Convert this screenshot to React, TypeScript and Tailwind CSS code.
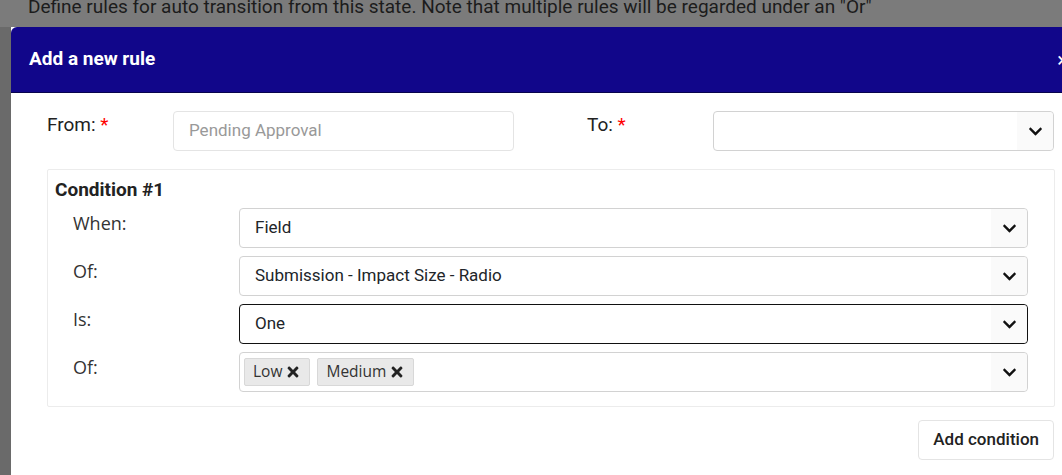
import React from 'react';
import { FaChevronDown, FaTimes } from 'react-icons/fa';

function Chevron() {
  return (
    <div className="flex h-full w-[36px] shrink-0 items-center justify-center rounded-r-[4px] bg-[#fafafa]">
      <FaChevronDown size={15} className="text-[#111]" />
    </div>
  );
}

function Select({ value, focused }: { value?: string; focused?: boolean }) {
  return (
    <div
      className={
        focused
          ? 'flex h-[40px] flex-1 items-center rounded-[4px] border border-[#111] bg-white'
          : 'flex h-[40px] flex-1 items-center rounded-[4px] border border-[#d2d2d2] bg-white'
      }
    >
      <div className="flex-1 pl-[15px] text-[17px] text-[#212529]">{value}</div>
      <Chevron />
    </div>
  );
}

function Tag({ label }: { label: string }) {
  return (
    <div className="flex h-[28px] items-center gap-[3px] rounded-[2px] border border-[#d8d8d8] bg-[#e9e9e9] px-[8px] font-['Open_Sans',sans-serif] text-[15.5px] text-[#333]">
      {label}
      <FaTimes size={16} className="text-[#222]" />
    </div>
  );
}

const conditionRows = [
  { label: 'When:', value: 'Field' },
  { label: 'Of:', value: 'Submission - Impact Size - Radio' },
  { label: 'Is:', value: 'One', focused: true },
];

export default function App() {
  return (
    <div className="h-[475px] w-[1062px] overflow-hidden bg-[#7b7b7b] font-['Roboto',sans-serif]">
      {/* dimmed page behind the dialog */}
      <div className="h-[27px] overflow-hidden pl-[28px]">
        <p className="-mt-[7px] whitespace-nowrap text-[19px] leading-[28px] text-[#1c1c1c]">
          Define rules for auto transition from this state. Note that multiple rules will be regarded under an "Or"
        </p>
      </div>

      <div className="flex">
        <div className="h-[448px] w-[11px] shrink-0 bg-[#6a6a6a]" />

        <div className="w-[1075px] shrink-0 bg-white">
          <div className="flex h-[66px] items-center justify-between rounded-tl-[6px] border-b border-[#08044d] bg-[#11068a] pl-[18px] pr-[18px]">
            <h2 className="text-[19px] font-bold text-white">Add a new rule</h2>
            <span className="text-[20px] leading-none text-white">×</span>
          </div>

          <div className="flex flex-col pl-[36px] pr-[31px] pt-[18px]">
            <div className="flex">
              <div className="w-[126px] pt-[2px] text-[19px] leading-6 text-[#222]">
                From: <span className="text-[#f00]">*</span>
              </div>
              <div className="flex h-[40px] w-[341px] items-center rounded-[4px] border border-[#e4e4e4] px-[15px] text-[17px] text-[#999]">
                Pending Approval
              </div>
              <div className="ml-[73px] w-[126px] pt-[2px] text-[19px] leading-6 text-[#222]">
                To: <span className="text-[#f00]">*</span>
              </div>
              <div className="flex w-[341px]">
                <Select />
              </div>
            </div>

            <div className="mt-[18px] w-[1008px] rounded-[2px] border border-[#ececec] pb-[14px] pl-[7px] pr-[7px] pt-[8px]">
              <div className="text-[19px] font-bold leading-6 text-[#222]">Condition #1</div>
              <div className="mt-[6px] flex flex-col gap-[8px] pl-[18px] pr-[19px]">
                {conditionRows.map((row, i) => (
                  <div key={i} className="flex">
                    <div className="w-[166px] pt-[3px] font-['Open_Sans',sans-serif] text-[18px] leading-6 text-[#333]">
                      {row.label}
                    </div>
                    <Select value={row.value} focused={row.focused} />
                  </div>
                ))}
                <div className="flex">
                  <div className="w-[166px] pt-[3px] font-['Open_Sans',sans-serif] text-[18px] leading-6 text-[#333]">
                    Of:
                  </div>
                  <div className="flex h-[40px] flex-1 items-center rounded-[4px] border border-[#d2d2d2] bg-white">
                    <div className="flex flex-1 items-center gap-[7px] pl-[4px]">
                      <Tag label="Low" />
                      <Tag label="Medium" />
                    </div>
                    <Chevron />
                  </div>
                </div>
              </div>
            </div>

            <div className="mt-[13px] flex w-[1008px] justify-end pr-[1px]">
              <button className="h-[40px] rounded-[4px] border border-[#e4e4e4] bg-white px-[14px] text-[17px] font-medium text-[#222]">
                Add condition
              </button>
            </div>
          </div>
        </div>
      </div>
    </div>
  );
}
